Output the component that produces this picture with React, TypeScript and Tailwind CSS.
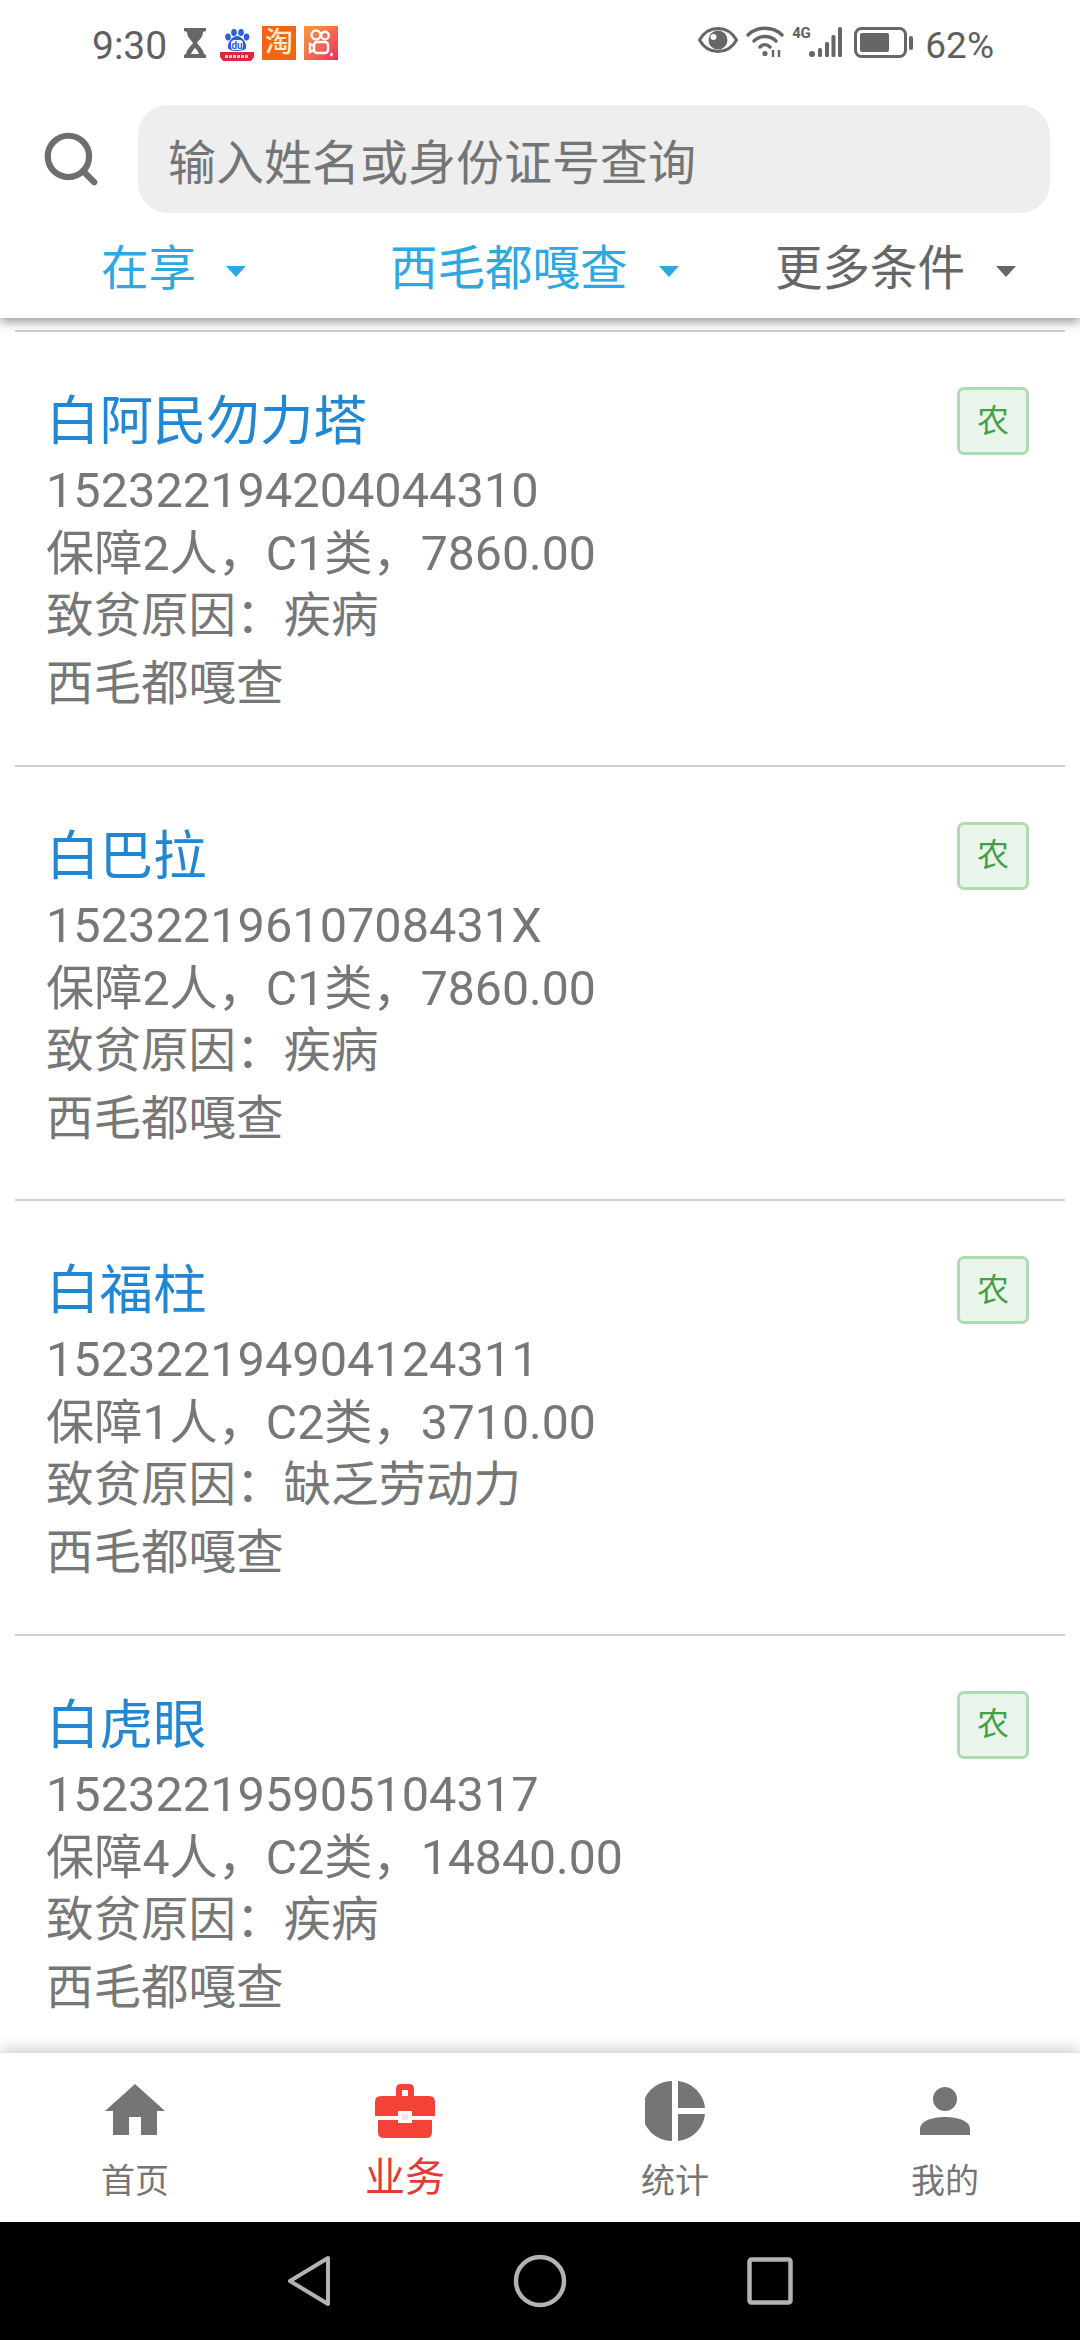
import { Search } from 'lucide-react'

interface Person {
  name: string
  id: string
  support: string
  reason: string
}

const PEOPLE: Person[] = [
  { name: '白阿民勿力塔', id: '152322194204044310', support: '保障2人，C1类，7860.00', reason: '致贫原因：疾病' },
  { name: '白巴拉', id: '15232219610708431X', support: '保障2人，C1类，7860.00', reason: '致贫原因：疾病' },
  { name: '白福柱', id: '152322194904124311', support: '保障1人，C2类，3710.00', reason: '致贫原因：缺乏劳动力' },
  { name: '白虎眼', id: '152322195905104317', support: '保障4人，C2类，14840.00', reason: '致贫原因：疾病' },
]

const FONT = "font-['Roboto','Noto_Sans_CJK_SC',sans-serif]"

function Caret({ className }: { className: string }) {
  return (
    <svg width="20" height="11" viewBox="0 0 20 11" className={className}>
      <path d="M0 0H20L10 11Z" fill="currentColor" />
    </svg>
  )
}

function StatusBar() {
  return (
    <div className="flex h-[105px] items-start pt-[25px] text-[#5f5f5f]">
      <span className="ml-[92px] w-[80px] text-[39px] leading-[42px]">9:30</span>
      {/* hourglass */}
      <svg width="24" height="30" viewBox="0 0 24 30" className="ml-[11px] mt-[3px]">
        <path d="M1 0H23V3L20 4C20 9 16 12 14 15C16 18 20 21 21 26L23 27V30H1V27L3 26C4 21 8 18 10 15C8 12 4 9 4 4L1 3Z" fill="#666" />
        <path d="M8 26C9 23 11 21 12 20C13 21 15 23 16 26Z" fill="#fff" />
      </svg>
      {/* baidu */}
      <svg width="34" height="32" viewBox="0 0 34 32" className="ml-[13px] mt-[4px]">
        <g fill="#2b5fd9">
          <ellipse cx="8" cy="8" rx="2.8" ry="3.4" />
          <ellipse cx="14" cy="3.5" rx="2.8" ry="3.4" />
          <ellipse cx="21" cy="3.5" rx="2.8" ry="3.4" />
          <ellipse cx="26.5" cy="8" rx="2.800" ry="3.4" />
          <path d="M17 7C22 7 27 14 26 19C25 23 9 23 8 19C7 14 12 7 17 7Z" />
        </g>
        <rect x="11" y="11" width="12" height="10" rx="3.500" fill="#fff" />
        <text x="17" y="19.500" textAnchor="middle" fontSize="10" fontWeight="700" fill="#2b5fd9" fontFamily="Roboto">du</text>
        <path d="M0 23H34V28L31 32H3L0 28Z" fill="#e0263a" />
        <path d="M5 27.500H29" stroke="#f8c9cc" strokeWidth="3" strokeDasharray="3 1" />
      </svg>
      {/* taobao */}
      <div className="ml-[8px] mt-[1px] flex h-[34px] w-[34px] items-center justify-center bg-[#f4650f] text-[28px] leading-none font-medium text-[#ffe9cf]">淘</div>
      {/* kuaishou */}
      <div className="ml-[8px] mt-[1px] h-[34px] w-[34px] bg-gradient-to-br from-[#f59a3a] to-[#f0245f]">
        <svg width="34" height="34" viewBox="0 0 34 34" fill="none" stroke="#fff" strokeWidth="2.400">
          <circle cx="12" cy="9" r="4.500" />
          <circle cx="21" cy="9.500" r="3.800" />
          <rect x="10" y="16" width="14" height="11" rx="3" />
          <path d="M10 20L6 18V26L10 24" />
          <path d="M28 27L27 30" />
        </svg>
      </div>
      <div className="flex-1" />
      {/* eye */}
      <svg width="40" height="26" viewBox="0 0 40 26" className="mt-[2px]" fill="none">
        <path d="M1.500 13C6 5 12 1.500 20 1.500S34 5 38.500 13C34 21 28 24.500 20 24.500S6 21 1.500 13Z" stroke="#666" strokeWidth="3" />
        <circle cx="20" cy="13" r="9.500" fill="#666" />
        <circle cx="15.500" cy="10" r="3" fill="#fff" />
      </svg>
      {/* wifi */}
      <svg width="38" height="32" viewBox="0 0 38 32" className="ml-[8px] mt-[1px]" fill="none" stroke="#666" strokeWidth="3.400" strokeLinecap="round">
        <path d="M2 9C11 0 27 0 36 9" />
        <path d="M8 15C14 9 24 9 30 15" />
        <path d="M14 21C17 18 21 18 24 21" />
        <circle cx="19" cy="27.500" r="2.600" fill="#666" stroke="none" />
        <path d="M27 31V24M33 24V31" strokeWidth="2.400" strokeLinecap="butt" />
      </svg>
      {/* 4G + signal */}
      <span className="ml-[8px] mt-[-2px] w-[20px] text-[15px] leading-[20px] font-bold tracking-[-0.5px]">4G</span>
      <svg width="34" height="32" viewBox="0 0 34 32" className="ml-[-3px] mt-[2px]" fill="#666">
        <circle cx="3" cy="27" r="3" />
        <rect x="9" y="21" width="4" height="9" rx="1.500" />
        <rect x="16" y="15" width="4" height="15" rx="1.500" />
        <rect x="22.500" y="8" width="4" height="22" rx="1.500" />
        <rect x="29" y="0" width="4" height="30" rx="1.500" />
      </svg>
      {/* battery */}
      <svg width="60" height="32" viewBox="0 0 60 32" className="ml-[11px] mt-[2px]" fill="none">
        <rect x="1.500" y="1.500" width="50" height="28" rx="6" stroke="#666" strokeWidth="3" />
        <rect x="6" y="6" width="29" height="19" rx="2" fill="#666" />
        <rect x="55" y="9" width="4" height="14" rx="2" fill="#666" />
      </svg>
      <span className="ml-[11px] text-[37px] leading-[42px]">62%</span>
      <div className="w-[86px]" />
    </div>
  )
}

function Header() {
  return (
    <div className="relative z-10 h-[318px] shrink-0 bg-white shadow-[0_4px_10px_rgba(0,0,0,0.4)]">
      <StatusBar />
      <div className="flex h-[108px] items-center pr-[30px]">
        <Search size={62} strokeWidth={2.400} className="ml-[40px] mr-[36px] shrink-0 text-[#6e6e6e]" />
        <div className="flex h-full flex-1 items-center rounded-[30px] bg-[#eeeeee] pl-[30px] pt-[10px] text-[48px] text-[#757575]">
          输入姓名或身份证号查询
        </div>
      </div>
      <div className="flex h-[105px] items-center pl-[101px] pt-[9px] text-[47.500px]">
        <div className="flex w-[289px] items-center text-[#2ea8e2]">
          在享
          <Caret className="ml-[30px] mt-[3px]" />
        </div>
        <div className="flex w-[385px] items-center text-[#2ea8e2]">
          西毛都嘎查
          <Caret className="ml-[31px] mt-[3px]" />
        </div>
        <div className="flex items-center text-[#666666]">
          更多条件
          <Caret className="ml-[31px] mt-[3px]" />
        </div>
      </div>
    </div>
  )
}

function PersonRow({ person }: { person: Person }) {
  return (
    <div className="flex h-[434.500px] justify-between border-t-2 border-[#cfcfcf] pl-[31px] pr-[36px] pt-[55px] text-[47.500px] leading-[63px] text-[#777777]">
      <div>
        <div className="h-[72px] text-[53.500px] leading-[70px] text-[#2187d3]">{person.name}</div>
        <div className="text-[48.700px]">{person.id}</div>
        <div className="text-[48.200px]">{person.support}</div>
        <div>{person.reason}</div>
        <div className="mt-[5px]">西毛都嘎查</div>
      </div>
      <div className="flex h-[68px] w-[72px] items-center justify-center rounded-[7px] border-[3px] border-[#aedbb0] bg-[#e9f5ea] text-[32px] text-[#43a047]">
        农
      </div>
    </div>
  )
}

function HomeIcon() {
  return (
    <svg width="60" height="51" viewBox="0 0 60 51" fill="#757575">
      <path d="M30 0L60 27H52V51H36V33H24V51H8V27H0Z" />
    </svg>
  )
}

function BriefcaseIcon() {
  return (
    <svg width="60" height="54" viewBox="0 0 60 54">
      <path d="M21 12V5Q21 0 26 0H34Q39 0 39 5V12H33V6H27V12Z" fill="#f44336" />
      <path d="M6 12H54Q60 12 60 18V32H0V18Q0 12 6 12Z" fill="#f44336" />
      <path d="M3 36H57V48Q57 54 51 54H9Q3 54 3 48Z" fill="#f44336" />
      <rect x="23" y="27" width="14" height="12" fill="#fff" />
      <rect x="27" y="30" width="6" height="6" fill="#f44336" opacity="0.15" />
    </svg>
  )
}

function PieIcon() {
  return (
    <svg width="60" height="60" viewBox="0 0 60 60" fill="#757575">
      <path d="M27 0V60A30 30 0 0 1 27 0Z" />
      <path d="M33 0A30 30 0 0 1 60 27H33Z" />
      <path d="M33 33H60A30 30 0 0 1 33 60Z" />
    </svg>
  )
}

function UserIcon() {
  return (
    <svg width="50" height="48" viewBox="0 0 50 48" fill="#757575">
      <ellipse cx="25" cy="12" rx="12" ry="12" />
      <path d="M0 48V42C0 34 12 30 25 30S50 34 50 42V48Z" />
    </svg>
  )
}

function TabBar() {
  return (
    <div className="relative z-10 grid h-[169px] shrink-0 grid-cols-4 bg-white shadow-[0_-4px_14px_rgba(0,0,0,0.2)]">
      <div className="flex flex-col items-center pt-[31px] text-[34px] text-[#757575]">
        <HomeIcon />
        <span className="mt-[26px] leading-[40px]">首页</span>
      </div>
      <div className="flex flex-col items-center pt-[31px] text-[40px] text-[#e53935]">
        <BriefcaseIcon />
        <span className="mt-[16px] leading-[48px]">业务</span>
      </div>
      <div className="flex flex-col items-center pt-[28px] text-[34px] text-[#757575]">
        <PieIcon />
        <span className="mt-[20px] leading-[40px]">统计</span>
      </div>
      <div className="flex flex-col items-center pt-[34px] text-[34px] text-[#757575]">
        <UserIcon />
        <span className="mt-[26px] leading-[40px]">我的</span>
      </div>
    </div>
  )
}

function NavBar() {
  return (
    <div className="flex h-[118px] shrink-0 items-center bg-black pb-[1px] pl-[287px]">
      <svg width="44" height="52" viewBox="0 0 44 52" fill="none" stroke="#b3b3b3" strokeWidth="4" strokeLinejoin="round">
        <path d="M41 3V49L3 26Z" />
      </svg>
      <svg width="54" height="54" viewBox="0 0 54 54" fill="none" stroke="#b3b3b3" strokeWidth="4.500" className="ml-[182px]">
        <circle cx="27" cy="27" r="24" />
      </svg>
      <svg width="46" height="48" viewBox="0 0 46 48" fill="none" stroke="#b3b3b3" strokeWidth="4.500" className="ml-[180px]">
        <rect x="2.500" y="2.500" width="41" height="43" rx="2" />
      </svg>
    </div>
  )
}

export default function App() {
  return (
    <div className={`flex h-[2340px] w-[1080px] flex-col overflow-hidden bg-white ${FONT}`}>
      <Header />
      <div className="flex-1 overflow-hidden px-[15px] pt-[12px]">
        {PEOPLE.map(person => (
          <PersonRow key={person.id} person={person} />
        ))}
      </div>
      <TabBar />
      <NavBar />
    </div>
  )
}
